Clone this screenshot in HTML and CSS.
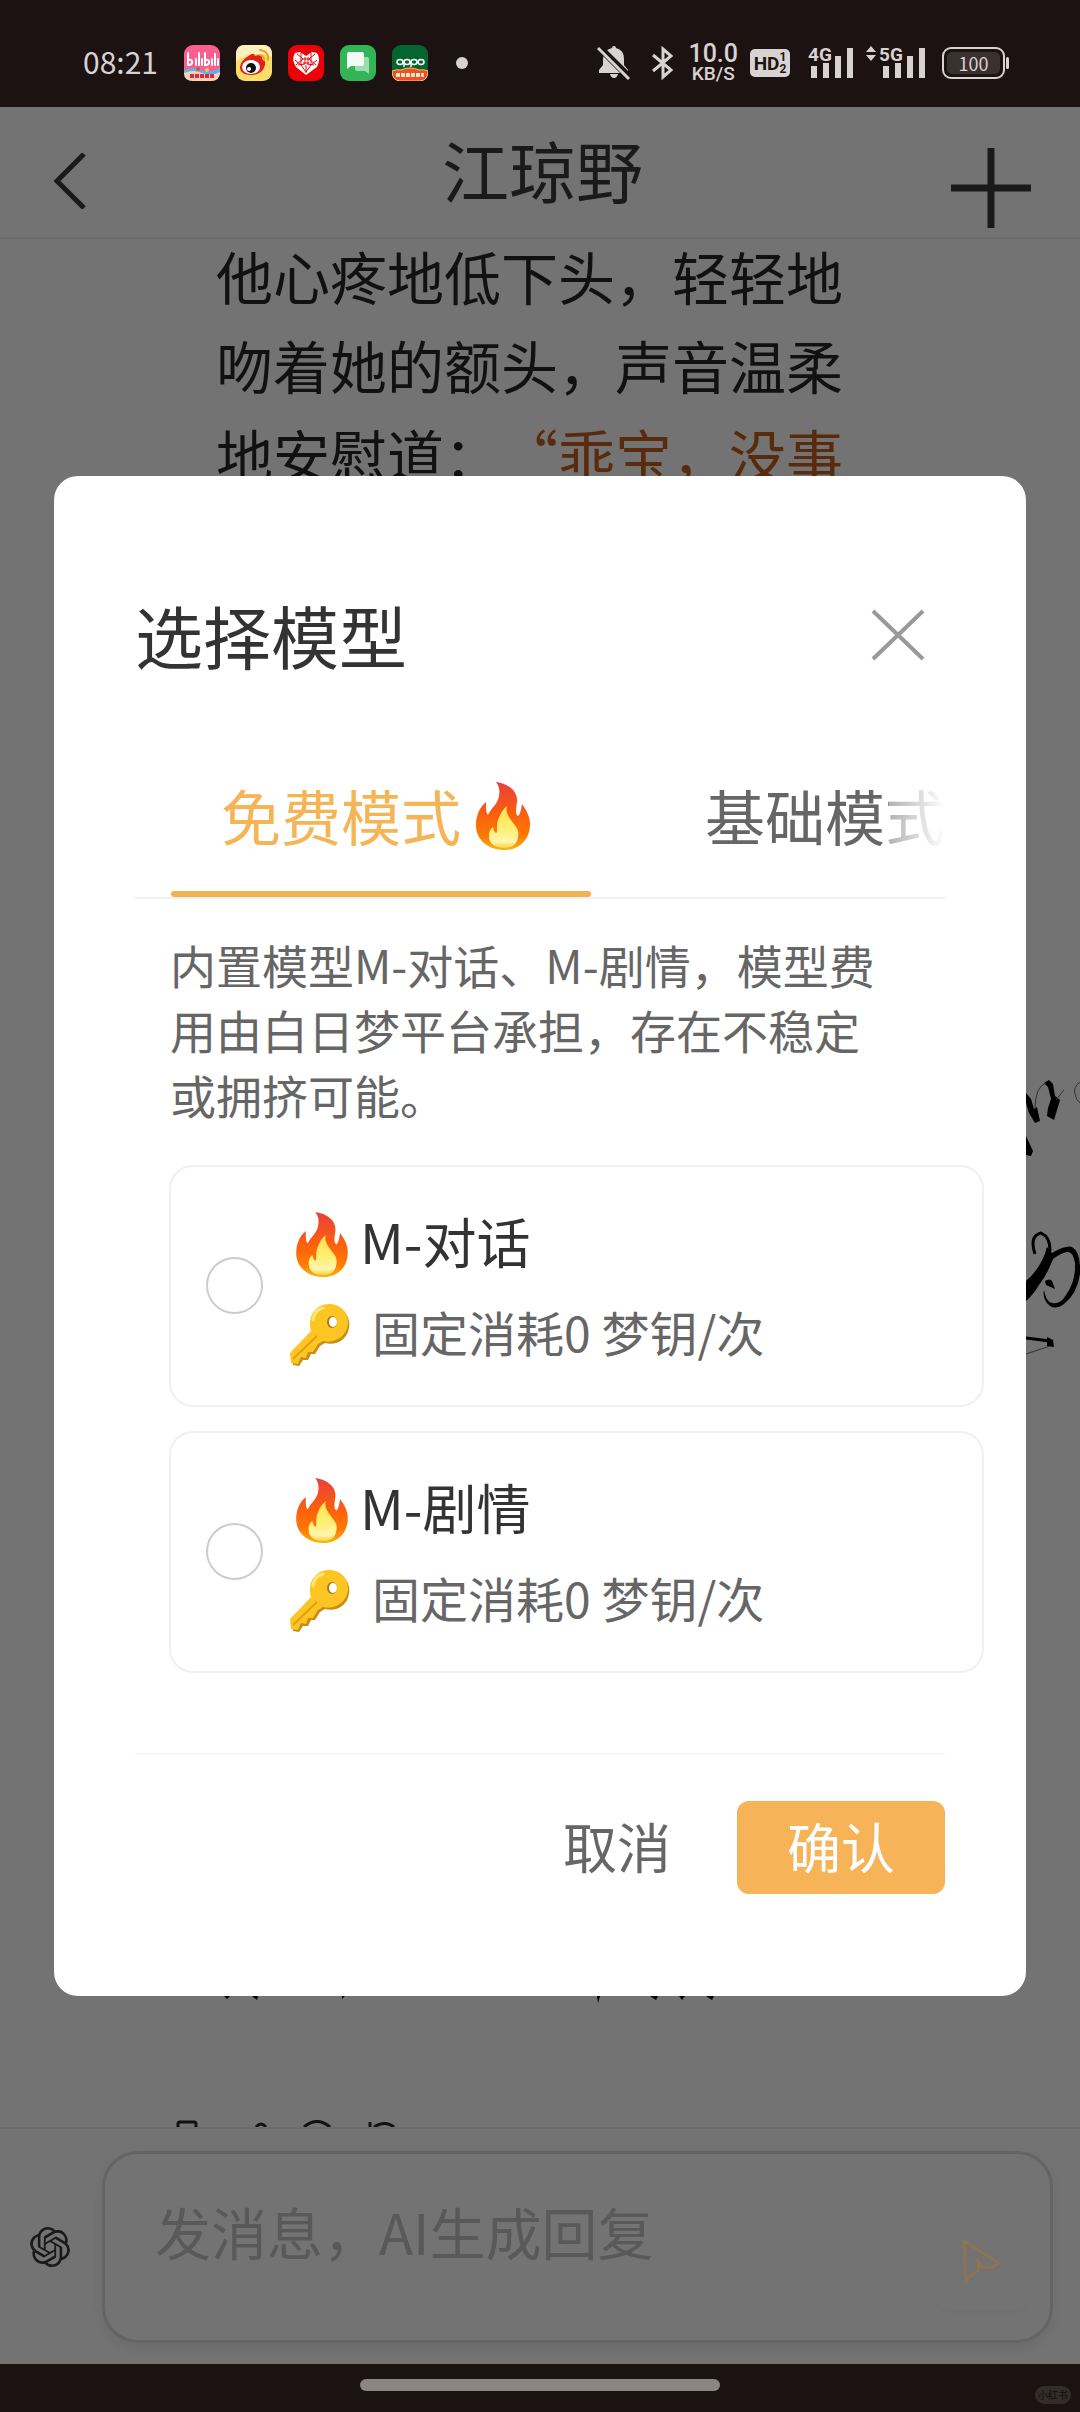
FILE: index.html
```html
<!DOCTYPE html>
<html lang="zh-CN">
  <head>
    <meta charset="UTF-8" />
    <meta name="viewport" content="width=device-width, initial-scale=1.0" />
    <title>江琼野</title>
    <link rel="stylesheet" href="styles.css" />
  </head>
  <body>
    <!-- shared emoji drawings -->
    <svg class="defs" width="0" height="0" aria-hidden="true">
      <defs>
        <linearGradient id="fireOuter" x1="0" y1="0" x2="0" y2="1">
          <stop offset="0" stop-color="#e8403a" />
          <stop offset="0.45" stop-color="#fb5d10" />
          <stop offset="0.8" stop-color="#ff7a00" />
          <stop offset="1" stop-color="#fbb40c" />
        </linearGradient>
        <linearGradient id="fireInner" x1="0" y1="0" x2="0" y2="1">
          <stop offset="0" stop-color="#ffe24a" />
          <stop offset="0.6" stop-color="#fff07a" />
          <stop offset="0.85" stop-color="#fff6b0" />
          <stop offset="1" stop-color="#fdd23c" />
        </linearGradient>
        <symbol id="fire" viewBox="0 0 54 68">
          <path fill="url(#fireOuter)" d="M20 0C34 2 42 10 41 20C40 27 39 32 42 34C44 33 45 28 46 22C50 28 54 34 54 42C54 58 43 68 29 68C12 68 0 58 0 43C0 33 4 25 10 20C10 26 10 31 12 33C15 26 22 22 23 14C24 8 23 4 20 0Z" />
          <path fill="url(#fireInner)" d="M31 24C29 30 33 36 38 42C42 47 43 50 42 55C41 63 35 66 28 66C19 66 13 62 13 54C13 50 14 47 17 45C18 48 18 50 20 51C22 50 20 44 22 38C24 32 27 27 31 24Z" />
        </symbol>
        <symbol id="key" viewBox="0 0 60 62">
          <path fill="#c98d14" d="M41 2C54 3 61 13 59 24C57 36 46 42 35 39L30 42L25 50L21 50L18 56L13 56L9 62L3 61L2 51L25 29Z" />
          <path fill="#fcc521" d="M39 0C51 0 59 9 58 20C57 32 45 40 33 37L28 40L23 48L18 48L16 54L11 53L8 60L1 59L0 49L21 27C17 12 26 0 39 0Z" />
          <path fill="none" stroke="#e0a015" stroke-width="2" d="M3 55L27 32" />
          <path fill="none" stroke="#ffe777" stroke-width="3" stroke-linecap="round" d="M23 16C24 9 28 5 33 4" />
          <ellipse cx="42" cy="18" rx="5" ry="6" fill="#a87a18" />
          <ellipse cx="43" cy="18" rx="4" ry="5" fill="#fff" />
        </symbol>
      </defs>
    </svg>

    <div class="status">
      <div class="status-left">
        <span class="clock">08:21</span>
        <svg class="app" viewBox="0 0 36 36">
          <rect width="36" height="36" rx="9" fill="#fb5f92" />
          <path fill="#58b5ea" d="M0 25q10-4 18 0t18-2v7H0z" />
          <path fill="#fbd3b1" d="M0 28q9-4 18 0t18-1q0 9-9 9H9q-9 0-9-8z" />
          <circle cx="14" cy="24" r="2" fill="#e5484d" /><circle cx="23" cy="25" r="2" fill="#f7c948" />
          <path fill="none" stroke="#fff" stroke-width="2" stroke-linecap="round" d="M4 8v12q5 0 4-4-1-2-4-1M12 14v6M15 8v12M18 14v6M21 8v12q5 0 4-4-1-2-4-1M28 14v6M31 9v11M34 14v6" />
          <path stroke="#e0284a" stroke-width="4" stroke-dasharray="4 1" d="M6 31h24" />
        </svg>
        <svg class="app" viewBox="0 0 36 36">
          <rect width="36" height="36" rx="9" fill="#fddd6a" />
          <path fill="#fdf0c0" d="M9 0h18q9 0 9 9v3Q18 4 0 16V9q0-9 9-9z" />
          <path fill="#e32217" d="M14 10q4-3 5 1 8-3 7 3 4 1 3 6-2 9-13 10Q4 30 4 22q1-7 10-12z" />
          <ellipse cx="15" cy="22" rx="9" ry="7" fill="#fff" />
          <circle cx="15" cy="23" r="5" fill="#111" />
          <circle cx="13" cy="24" r="2" fill="#fff" />
          <path fill="none" stroke="#f2a324" stroke-width="2" stroke-linecap="round" d="M24 5q9 1 8 10M24 10q4 0 4 5" />
        </svg>
        <svg class="app" viewBox="0 0 36 36">
          <rect width="36" height="36" rx="9" fill="#ee0008" />
          <path fill="#fff" d="M18 30L8 22Q3 14 7 8l5-1 6 4 6-4 5 1q4 6 0 14z" />
          <path fill="none" stroke="#ee0008" stroke-width="1" d="M9 9l6 5-7 6M13 8v12l-6-5M27 9l-6 5 7 6M23 8v12l6-5M13 20l5 7 5-7M18 20v8M10 20l7-1M26 20l-7-1M15 14h6M15 18h6M17 12v7M20 12v7" />
        </svg>
        <svg class="app" viewBox="0 0 36 36">
          <rect width="36" height="36" rx="9" fill="#32b457" />
          <path fill="#9bdcac" d="M17 12h10q2 0 2 2v15l-4-3h-8q-2 0-2-2V14q0-2 2-2z" />
          <path fill="#f1fbf3" d="M9 7h13q2 0 2 2v10q0 2-2 2H11l-4 3V9q0-2 2-2z" />
        </svg>
        <svg class="app" viewBox="0 0 36 36">
          <rect width="36" height="36" rx="9" fill="#04652f" />
          <path fill="#f04e23" stroke="#f8c56b" stroke-width="1" d="M0 26q5-2 9-1 9-4 18 0 5-1 9 1 0 10-9 10H9q-9 0-9-10z" />
          <g fill="none" stroke="#fff" stroke-width="1.5">
            <ellipse cx="8" cy="17" rx="3" ry="2.5" /><ellipse cx="15" cy="17" rx="3" ry="2.5" />
            <ellipse cx="22" cy="17" rx="3" ry="2.5" /><ellipse cx="29" cy="17" rx="3" ry="2.5" />
            <path d="M12 16v6M19 16v6" />
          </g>
          <path stroke="#fde3c8" stroke-width="4" stroke-dasharray="4 1" d="M4 30h28" />
        </svg>
        <span class="dot"></span>
      </div>

      <div class="status-right">
        <svg width="34" height="34" viewBox="0 0 34 34">
          <path fill="#d8d2d1" d="M17 0q2 0 2 2 8 2 8 11v6l4 5v3H2v-3l4-5v-6q0-9 9-11 0-2 2-2zM13 28h8q-1 4-4 4t-4-4z" />
          <path stroke="#1b1211" stroke-width="7" d="M1 0l32 32" />
          <path stroke="#d8d2d1" stroke-width="3" d="M1 2l31 31" />
        </svg>
        <svg class="bt" width="22" height="34" viewBox="0 0 22 34">
          <path fill="none" stroke="#d8d2d1" stroke-width="3" d="M1 9l18 15-8 7V3l8 7L1 25" />
        </svg>
        <div class="speed"><b>10.0</b><span>KB/S</span></div>
        <div class="hd"><b>HD</b><span>1<br />2</span></div>
        <svg class="sig" width="46" height="34" viewBox="0 0 46 34">
          <path fill="#d8d2d1" d="M3 20h6v12H3zM15 17h6v15h-6zM27 10h6v22h-6zM39 2h6v30h-6z" />
          <text x="0" y="15">4G</text>
        </svg>
        <svg class="sig" width="60" height="34" viewBox="0 0 60 34">
          <path fill="#d8d2d1" d="M17 20h6v12h-6zM29 17h6v15h-6zM41 10h6v22h-6zM53 2h6v30h-6zM0 6l5-6 5 6zM0 9l5 6 5-6z" />
          <text x="13" y="15">5G</text>
        </svg>
        <div class="battery"><span>100</span></div>
      </div>
    </div>

    <div class="app-page">
      <header class="topbar">
        <button class="icon-btn back" aria-label="返回">
          <svg width="32" height="56" viewBox="0 0 32 56"><path fill="none" stroke="#1a1a1a" stroke-width="5" d="M30 1L3 28l27 27" /></svg>
        </button>
        <h1>江琼野</h1>
        <button class="icon-btn plus" aria-label="更多">
          <svg width="80" height="80" viewBox="0 0 80 80"><path stroke="#1a1a1a" stroke-width="7" d="M40 0v80M0 40h80" /></svg>
        </button>
      </header>

      <main class="chat">
        <p class="message">他心疼地低下头，轻轻地吻着她的额头，声音温柔地安慰道：<em>“乖宝，没事</em></p>

        <svg class="ink" width="54" height="290" viewBox="0 0 54 290">
          <path d="M0 18l5 6 3 10 3-2 3 14-5 2-6-10-3-10zM18 8l5-3 4 4 2 12 5 4-6 20-7-4 1-8 3-9-3-12zM0 61l7 15-2 5-5-1z" />
          <path class="thin" d="M9 34Q9 12 20 8M30 25l8-10M54 7q-7 5-5 12 1 6 5 9" />
          <path class="line" d="M9 179Q3 161 15 158q9 4 9 17Q16 196 0 223" />
          <path d="M21 172l5 6q14-8 20-6 9 5 8 27-3 20-16 30-8 6-14 2-8-6-6-16 2 12 8 13 8 2 14-8 10-14 9-32-2-12-8-11-6 1-14 7-6 16-14 26-6 10-13 16v-20q16-14 21-34zM19 206q5-3 7 0l3 8-9-4z" />
          <path class="line" d="M0 263l24 3" />
          <path d="M21 262l6 3 1 7-7-1z" />
          <path class="thin" d="M24 271L0 279" />
        </svg>

        <div class="chat-end">
          <!-- last line of the message, only its strokes' tails show -->
          <svg class="tails" width="500" height="8" viewBox="0 0 500 8">
            <path d="M8 0h6l-3 3zM36 0h6l-1 4zM126 0h3l-3 3zM381 0h3l-2 7zM434 0h8l-2 4zM463 0h6l-3 4zM490 0h8l-2 4z" />
          </svg>
          <svg class="actions" width="240" height="7" viewBox="0 0 240 7">
            <path d="M2 7V4q0-2 2-2h14q2 0 2 2v3M80 7q5-6 10 0M128 7q13-11 26 0M194 2v5M198 7q11-7 20 0" />
          </svg>
        </div>
      </main>

      <form class="composer">
        <button type="button" class="icon-btn" aria-label="选择模型">
          <svg width="40" height="42" viewBox="0 0 24 24" fill="#1a1a1a"><path d="M22.2819 9.8211a5.9847 5.9847 0 0 0-.5157-4.9108 6.0462 6.0462 0 0 0-6.5098-2.9A6.0651 6.0651 0 0 0 4.9807 4.1818a5.9847 5.9847 0 0 0-3.9977 2.9 6.0462 6.0462 0 0 0 .7427 7.0966 5.98 5.98 0 0 0 .511 4.9107 6.051 6.051 0 0 0 6.5146 2.9001A5.9847 5.9847 0 0 0 13.2599 24a6.0557 6.0557 0 0 0 5.7718-4.2058 5.9894 5.9894 0 0 0 3.9977-2.9001 6.0557 6.0557 0 0 0-.7475-7.0729zm-9.022 12.6081a4.4755 4.4755 0 0 1-2.8764-1.0408l.1419-.0804 4.7783-2.7582a.7948.7948 0 0 0 .3927-.6813v-6.7369l2.02 1.1686a.071.071 0 0 1 .038.0615v5.5826a4.504 4.504 0 0 1-4.4945 4.4944zm-9.6607-4.1254a4.4708 4.4708 0 0 1-.5346-3.0137l.142.0852 4.783 2.7582a.7712.7712 0 0 0 .7806 0l5.8428-3.3685v2.3324a.0804.0804 0 0 1-.0332.0615L9.74 19.9502a4.4992 4.4992 0 0 1-6.1408-1.6464zM2.3408 7.8956a4.485 4.485 0 0 1 2.3655-1.9728V11.6a.7664.7664 0 0 0 .3879.6765l5.8144 3.3543-2.0201 1.1685a.0757.0757 0 0 1-.071 0l-4.8303-2.7865A4.504 4.504 0 0 1 2.3408 7.872zm16.5963 3.8558L13.1038 8.364 15.1192 7.2a.0757.0757 0 0 1 .071 0l4.8303 2.7913a4.4944 4.4944 0 0 1-.6765 8.1042v-5.6772a.79.79 0 0 0-.407-.667zm2.0107-3.0231l-.142-.0852-4.7735-2.7818a.7759.7759 0 0 0-.7854 0L9.409 9.2297V6.8974a.0662.0662 0 0 1 .0284-.0615l4.8303-2.7866a4.4992 4.4992 0 0 1 6.6802 4.66zM8.3065 12.863l-2.02-1.1638a.0804.0804 0 0 1-.038-.0567V6.0742a4.4992 4.4992 0 0 1 7.3757-3.4537l-.142.0805L8.704 5.459a.7948.7948 0 0 0-.3927.6813zm1.0976-2.3654l2.602-1.4998 2.6069 1.4998v2.9994l-2.5974 1.4997-2.6067-1.4997Z" /></svg>
        </button>
        <div class="input-box">
          <textarea rows="1" aria-label="消息" placeholder="发消息，AI生成回复"></textarea>
          <button type="button" class="send" aria-label="发送">
            <svg width="40" height="46" viewBox="0 0 40 46"><path fill="none" stroke="#8c7454" stroke-width="3" d="M2 3l35 22q-10 7-17 4l-5-8q2 6 1 12-6 3-12 10z" /></svg>
          </button>
        </div>
      </form>

      <div class="overlay">
        <section class="modal" role="dialog" aria-labelledby="modalTitle">
          <div class="modal-head">
            <h2 id="modalTitle">选择模型</h2>
            <button class="icon-btn close" aria-label="关闭">
              <svg width="54" height="52" viewBox="0 0 54 52"><path stroke="#999" stroke-width="4" d="M2 2l50 48M52 2L2 50" /></svg>
            </button>
          </div>

          <div class="tabs" role="tablist">
            <button class="tab active" role="tab" aria-selected="true">免费模式<svg class="tab-fire"><use href="#fire" /></svg></button>
            <button class="tab" role="tab" aria-selected="false">基础模式</button>
          </div>

          <p class="desc">内置模型M-对话、M-剧情，模型费用由白日梦平台承担，存在不稳定或拥挤可能。</p>

          <div class="models">
            <label class="model">
              <input type="radio" name="model" />
              <span class="model-info">
                <span class="model-name"><svg class="fire"><use href="#fire" /></svg>M-对话</span>
                <span class="model-cost"><svg class="key"><use href="#key" /></svg>固定消耗0 梦钥/次</span>
              </span>
            </label>
            <label class="model">
              <input type="radio" name="model" />
              <span class="model-info">
                <span class="model-name"><svg class="fire"><use href="#fire" /></svg>M-剧情</span>
                <span class="model-cost"><svg class="key"><use href="#key" /></svg>固定消耗0 梦钥/次</span>
              </span>
            </label>
          </div>

          <div class="modal-foot">
            <button class="btn">取消</button>
            <button class="btn primary">确认</button>
          </div>
        </section>
      </div>
    </div>

    <div class="navbar">
      <span class="home"></span>
      <span class="mark">小红书</span>
    </div>
  </body>
</html>
```
FILE: styles.css
```css
* {
  box-sizing: border-box;
}
body {
  margin: 0;
  min-height: 100vh;
  display: flex;
  flex-direction: column;
  background: #737373;
  font-family: "Noto Sans CJK SC", sans-serif;
}
h1,
h2,
p {
  margin: 0;
  font-weight: 400;
}
svg {
  display: block;
  flex: none;
}
.defs {
  position: absolute;
}
button,
textarea {
  font-family: inherit;
  border: none;
  background: none;
  padding: 0;
}
.icon-btn {
  flex: none;
}

/* status bar */
.status {
  height: 107px;
  padding: 19px 70px 0 83px;
  display: flex;
  justify-content: space-between;
  background: #1b1211;
  color: #d8d2d1;
}
.status-left {
  display: flex;
  align-items: center;
  gap: 16px;
}
.clock {
  width: 85px;
  padding-bottom: 4px;
  font-size: 30px;
}
.app {
  width: 36px;
  height: 36px;
}
.dot {
  width: 12px;
  height: 12px;
  margin-left: 12px;
  border-radius: 50%;
  background: #d8d2d1;
}
.status-right {
  display: flex;
  align-items: center;
  gap: 12px;
}
.bt {
  margin: 0 2px 0 9px;
}
.speed {
  display: flex;
  flex-direction: column;
  align-items: center;
  font-family: Roboto, sans-serif;
}
.speed b {
  font-size: 25px;
  line-height: 22px;
  font-weight: 500;
}
.speed span {
  font-size: 19px;
  line-height: 18px;
  font-weight: 500;
}
.hd {
  width: 40px;
  height: 28px;
  display: flex;
  align-items: center;
  justify-content: center;
  border-radius: 5px;
  background: #d8d2d1;
  color: #1b1211;
  font-family: Roboto, sans-serif;
}
.hd b {
  font-size: 19px;
}
.hd span {
  font-size: 12px;
  line-height: 12px;
  font-weight: 700;
}
.sig {
  margin-left: 6px;
  overflow: visible;
}
.sig + .sig {
  margin-left: 0;
}
.sig text {
  font: 700 19px Roboto, sans-serif;
  fill: #d8d2d1;
  stroke: #1b1211;
  stroke-width: 3px;
  paint-order: stroke;
}
.battery {
  position: relative;
  width: 63px;
  height: 32px;
  margin: 0 5px 0 4px;
  padding: 3px;
  border: 2px solid #d8d2d1;
  border-radius: 9px;
}
.battery span {
  display: block;
  border-radius: 5px;
  background: #3a302e;
  font-size: 18px;
  line-height: 22px;
  text-align: center;
}
.battery::after {
  content: "";
  position: absolute;
  right: -6px;
  top: 8px;
  width: 3px;
  height: 12px;
  border-radius: 2px;
  background: #d8d2d1;
}

/* chat page */
.app-page {
  position: relative;
  flex: 1;
  display: flex;
  flex-direction: column;
}
.topbar {
  height: 132px;
  padding: 0 49px 0 54px;
  display: flex;
  align-items: center;
  justify-content: space-between;
  border-bottom: 2px solid #6c6c6c;
}
.topbar h1 {
  flex: 1;
  padding: 0 0 6px 48px;
  font-size: 67px;
  line-height: 100px;
  text-align: center;
  color: #1a1a1a;
}
.back {
  padding-top: 18px;
}
.plus {
  padding-top: 32px;
}
.chat {
  position: relative;
  flex: 1;
  display: flex;
  flex-direction: column;
  justify-content: space-between;
  padding-left: 20%;
  overflow: hidden;
}
.message {
  max-width: 640px;
  margin-top: -8px;
  font-size: 57px;
  line-height: 89px;
  color: #111;
  text-spacing-trim: space-all;
}
.message em {
  font-style: normal;
  color: #5a2a0c;
}
.ink {
  position: absolute;
  right: 0;
  top: 836px;
}
.ink .line {
  fill: none;
  stroke: #000;
  stroke-width: 3px;
}
.ink .thin {
  fill: none;
  stroke: #333;
  stroke-width: 1px;
}
.tails {
  margin-bottom: 116px;
}
.actions {
  margin-left: -40px;
  fill: none;
  stroke: #111;
  stroke-width: 3px;
}

/* composer */
.composer {
  display: flex;
  align-items: center;
  gap: 32px;
  padding: 22px 27px 21px 30px;
  border-top: 2px solid #6c6c6c;
}
.input-box {
  flex: 1;
  display: flex;
  align-items: center;
  height: 192px;
  padding: 0 20px 0 50px;
  border: 3px solid #646464;
  border-radius: 36px;
  box-shadow: 0 6px 12px #6c6c6c;
}
.input-box textarea {
  flex: 1;
  height: 112px;
  resize: none;
  font-size: 56px;
  line-height: 80px;
  color: #1a1a1a;
}
.input-box textarea::placeholder {
  color: #595959;
}
.send {
  display: flex;
  justify-content: center;
  width: 96px;
  padding: 26px 0;
  margin-top: 28px;
  border-radius: 16px;
  box-shadow: 0 3px 3px -2px #6c7074;
}

/* model picker */
.overlay {
  position: absolute;
  inset: 0;
  display: flex;
  align-items: center;
  justify-content: center;
}
.modal {
  width: 90%;
  padding: 108px 81px 102px;
  border-radius: 24px;
  background: #fff;
}
.modal-head {
  height: 102px;
  display: flex;
  align-items: center;
  justify-content: space-between;
}
.modal-head h2 {
  font-size: 68px;
  color: #333;
}
.close {
  margin-right: 20px;
}
.tabs {
  position: relative;
  display: flex;
  gap: 64px;
  height: 159px;
  margin-top: 54px;
  padding-left: 36px;
  border-bottom: 2px solid #f1f1f2;
  overflow: hidden;
}
.tabs::after {
  content: "";
  position: absolute;
  right: 0;
  top: 0;
  width: 56px;
  height: 100%;
  background: linear-gradient(to right, rgba(255, 255, 255, 0.5), #fff);
}
.tab {
  position: relative;
  flex: none;
  display: flex;
  align-items: center;
  padding: 0 50px 8px;
  font-size: 60px;
  color: #666;
}
.tab.active {
  color: #f5b456;
}
.tab.active::after {
  content: "";
  position: absolute;
  left: 0;
  right: 0;
  bottom: 0;
  height: 6px;
  border-radius: 3px;
  background: #f1b256;
}
.tab-fire {
  width: 54px;
  height: 68px;
  margin: 4px 11px 0 15px;
}
.desc {
  max-width: 755px;
  margin-top: 33px;
  padding-left: 35px;
  font-size: 46px;
  line-height: 65px;
  color: #666;
}
.models {
  display: flex;
  flex-direction: column;
  gap: 24px;
  margin: 38px -39px 0 34px;
}
.model {
  display: flex;
  align-items: center;
  gap: 27px;
  height: 242px;
  padding: 0 35px;
  border: 2px solid #f0f0f0;
  border-radius: 24px;
}
.model input {
  appearance: none;
  flex: none;
  width: 57px;
  height: 57px;
  margin: 0;
  border: 2px solid #ccc;
  border-radius: 50%;
}
.model input:checked {
  border: 16px solid #f5b456;
}
.model-info,
.model-name,
.model-cost {
  display: flex;
}
.model-info {
  flex-direction: column;
}
.model-name,
.model-cost {
  align-items: center;
  height: 90px;
}
.model-name {
  font-size: 54px;
  color: #333;
}
.model-cost {
  font-size: 48px;
  color: #666;
}
.fire {
  width: 52px;
  height: 65px;
  margin: 8px 12px 0 6px;
}
.key {
  width: 60px;
  height: 62px;
  margin: 8px 22px 0 0;
}
.modal-foot {
  display: flex;
  justify-content: flex-end;
  gap: 16px;
  margin-top: 80px;
  padding-top: 46px;
  border-top: 2px solid #f7f7f8;
}
.btn {
  height: 93px;
  padding: 0 50px 4px;
  border-radius: 12px;
  font-size: 54px;
  color: #666;
}
.btn.primary {
  background: #f7b357;
  color: #fff;
}

/* system navigation */
.navbar {
  position: relative;
  display: flex;
  justify-content: center;
  height: 48px;
  padding-top: 15px;
  background: #1b1211;
}
.home {
  width: 360px;
  height: 12px;
  border-radius: 6px;
  background: #8c8582;
}
.mark {
  position: absolute;
  right: 9px;
  bottom: 8px;
  padding: 0 3px;
  border-radius: 9px;
  background: #352c2a;
  font-size: 10px;
  line-height: 18px;
  color: #120c0b;
}
```
